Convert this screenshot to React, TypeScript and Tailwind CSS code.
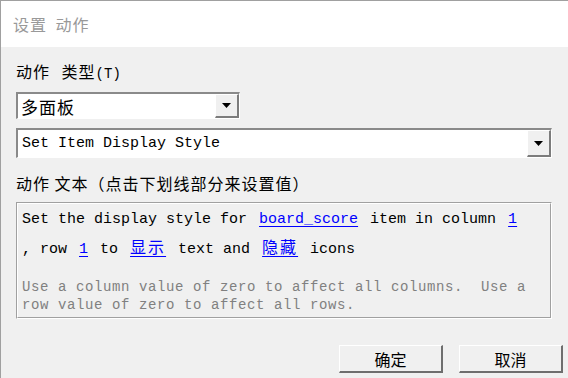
const cjk = "font-['Noto_Sans_CJK_SC',sans-serif]";
const mono = "font-['Liberation_Mono','Noto_Sans_CJK_SC',monospace]";

function Arrow() {
  return (
    <svg width="9" height="5" viewBox="0 0 9 5" className="block">
      <path d="M0 0h9L4.5 5z" fill="#000" />
    </svg>
  );
}

function Select({ width, height, children }: { width: string; height: string; children: React.ReactNode }) {
  return (
    <div className={`${width} ${height} flex border-t-2 border-l-2 border-[#8a8a8a] border-r border-b border-r-white border-b-white`}>
      <div className="flex-1 flex items-center bg-white pl-[3px] overflow-hidden whitespace-nowrap">{children}</div>
      <div className="w-[24px] flex items-center justify-center bg-[#f0f0f0] border-t border-l border-white border-r-2 border-b-2 border-r-[#7c7c7c] border-b-[#7c7c7c]">
        <Arrow />
      </div>
    </div>
  );
}

function Link({ children, zh }: { children: React.ReactNode; zh?: boolean }) {
  return (
    <span
      className={`mx-[3px] text-[#0000ff] underline underline-offset-[3px] ${
        zh ? `${cjk} text-[16px] tracking-[2px]` : ""
      }`}
    >
      {children}
    </span>
  );
}

function Button({ label }: { label: string }) {
  return (
    <button
      className={`w-[104px] h-[28px] bg-[#f0f0f0] border-t border-l border-white border-r-2 border-b-2 border-r-[#6e6e6e] border-b-[#6e6e6e] ${cjk} text-[16px] text-black flex items-center justify-center`}
    >
      {label}
    </button>
  );
}

export default function App() {
  return (
    <div className="w-[568px] h-[378px] bg-[#f0f0f0] border-t border-l border-[#a0a0a0] flex flex-col overflow-hidden">
      {/* Title */}
      <div className={`h-[46px] bg-white flex items-center pl-[12px] ${cjk} text-[16px] tracking-[1px] [word-spacing:4px] text-[#999999]`}>
        设置 动作
      </div>

      <div className="flex-1 flex flex-col pl-[15px] pr-[5px] text-black">
        <div className={`mt-[14px] h-[20px] leading-[20px] ${cjk} text-[16px] tracking-[1px] [word-spacing:7px]`}>
          动作 类型<span className={`${mono} text-[14px] tracking-normal`}>(T)</span>
        </div>

        <div className="mt-[11px]">
          <Select width="w-[224px]" height="h-[27px]">
            <span className={`${cjk} text-[17px] tracking-[1px] leading-none`}>多面板</span>
          </Select>
        </div>

        <div className="mt-[9px]">
          <Select width="w-[536px]" height="h-[30px]">
            <span className={`${mono} text-[15px] leading-none pl-[1px]`}>Set Item Display Style</span>
          </Select>
        </div>

        <div className={`mt-[15px] h-[20px] leading-[20px] ${cjk} text-[16px] tracking-[1px]`}>
          动作 文本（点击下划线部分来设置值）
        </div>

        {/* Description box */}
        <div className="mt-[9px] w-[536px] h-[117px] border-t border-l border-[#a0a0a0] border-r border-b border-r-white border-b-white">
          <div className="h-full border-t border-l border-white border-r border-b border-r-[#a0a0a0] border-b-[#a0a0a0] pl-[4px] pt-[3px]">
            <div className={`${mono} text-[15px] leading-[26px] whitespace-pre`}>
              {"Set the display style for "}
              <Link>board_score</Link>
              {" item in column "}
              <Link>1</Link>
            </div>
            <div className={`${mono} text-[15px] leading-[26px] whitespace-pre`}>
              {", row "}
              <Link>1</Link>
              {" to "}
              <Link zh>显示</Link>
              {" text and "}
              <Link zh>隐藏</Link>
              {" icons"}
            </div>
            <div className={`mt-[15px] ${mono} text-[14px] tracking-[0.6px] leading-[18px] text-[#808080] whitespace-pre`}>
              {"Use a column value of zero to affect all columns.  Use a\nrow value of zero to affect all rows."}
            </div>
          </div>
        </div>

        <div className="mt-[26px] flex justify-end gap-[16px]">
          <Button label="确定" />
          <Button label="取消" />
        </div>
      </div>
    </div>
  );
}
